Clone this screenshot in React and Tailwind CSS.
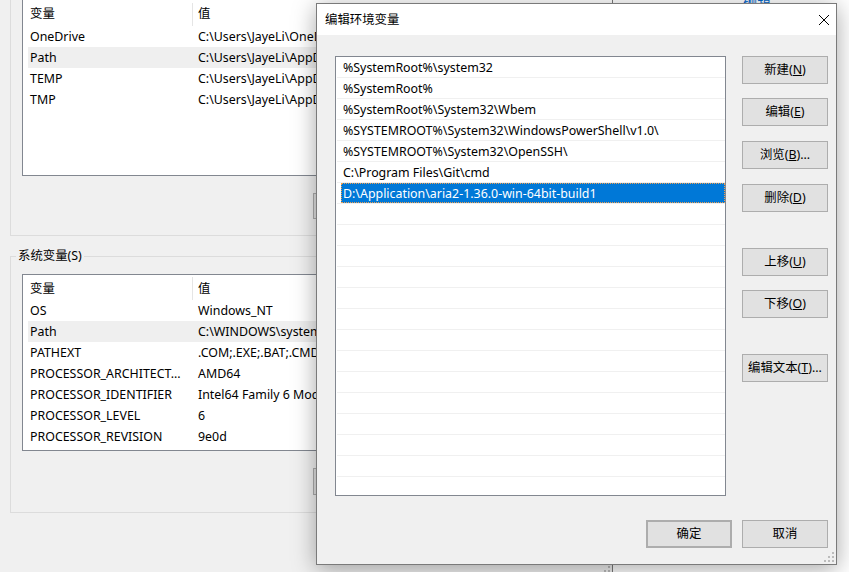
const userVars = [
  ['OneDrive', 'C:\\Users\\JayeLi\\OneDrive'],
  ['Path', 'C:\\Users\\JayeLi\\AppData\\Local\\Microsoft\\WindowsApps;'],
  ['TEMP', 'C:\\Users\\JayeLi\\AppData\\Local\\Temp'],
  ['TMP', 'C:\\Users\\JayeLi\\AppData\\Local\\Temp'],
];

const sysVars = [
  ['OS', 'Windows_NT'],
  ['Path', 'C:\\WINDOWS\\system32;C:\\WINDOWS;C:\\WINDOWS\\System32\\Wbem;'],
  ['PATHEXT', '.COM;.EXE;.BAT;.CMD;.VBS;.VBE;.JS;.JSE;.WSF;.WSH;.MSC'],
  ['PROCESSOR_ARCHITECT...', 'AMD64'],
  ['PROCESSOR_IDENTIFIER', 'Intel64 Family 6 Model 158 Stepping 13, GenuineIntel'],
  ['PROCESSOR_LEVEL', '6'],
  ['PROCESSOR_REVISION', '9e0d'],
];

const paths = [
  '%SystemRoot%\\system32',
  '%SystemRoot%',
  '%SystemRoot%\\System32\\Wbem',
  '%SYSTEMROOT%\\System32\\WindowsPowerShell\\v1.0\\',
  '%SYSTEMROOT%\\System32\\OpenSSH\\',
  'C:\\Program Files\\Git\\cmd',
  'D:\\Application\\aria2-1.36.0-win-64bit-build1',
];

function Grip() {
  return (
    <svg width="10" height="10" viewBox="0 0 10 10">
      <rect x="8" y="0" width="2" height="2" fill="#bcbcbc" />
      <rect x="4" y="4" width="2" height="2" fill="#bcbcbc" />
      <rect x="8" y="4" width="2" height="2" fill="#bcbcbc" />
      <rect x="0" y="8" width="2" height="2" fill="#bcbcbc" />
      <rect x="4" y="8" width="2" height="2" fill="#bcbcbc" />
      <rect x="8" y="8" width="2" height="2" fill="#bcbcbc" />
    </svg>
  );
}

function Btn({ children, className = '' }) {
  return (
    <div className={`flex h-[28px] w-[86px] shrink-0 items-center justify-center border border-[#adadad] bg-[#e1e1e1] text-black ${className}`}>
      {children}
    </div>
  );
}

function VarRows({ rows }) {
  return rows.map(([name, value]) => (
    <div
      key={name}
      className={`ml-[5px] flex h-[21px] items-center whitespace-nowrap pt-[2px] ${name === 'Path' ? 'bg-[#efefef]' : ''}`}
    >
      <span className="w-[170px] shrink-0 pl-[2px]">{name}</span>
      <span>{value}</span>
    </div>
  ));
}

function VarHeader({ h }) {
  return (
    <div className={`flex items-center ${h}`}>
      <span className="w-[169px] shrink-0 pl-[7px] pt-[3px]">变量</span>
      <span className="h-[23px] w-px shrink-0 self-end bg-[#e5e5e5]" />
      <span className="pl-[5px] pt-[3px]">值</span>
    </div>
  );
}

export default function App() {
  return (
    <div className="relative flex h-[572px] w-[849px] overflow-hidden bg-white font-['Noto_Sans','Noto_Sans_CJK_SC',sans-serif] text-[12.4px] text-black">
      {/* window behind */}
      <div className="relative h-full w-[613px] shrink-0 overflow-hidden border-r border-[#7a7a7a] bg-[#f0f0f0]">
        <div className="ml-[10px] w-[700px] border-b border-l border-[#dcdcdc] pb-[16px] pl-[11px]">
          <div className="h-[176px] w-[640px] border-b border-l border-[#828790] bg-white">
            <VarHeader h="h-[26px]" />
            <VarRows rows={userVars} />
          </div>
          <div className="ml-[291px] mt-[17px] flex gap-[8px]">
            <div className="flex h-[26px] w-[86px] items-center justify-center border border-[#adadad] bg-[#e1e1e1]">新建(N)...</div>
          </div>
        </div>

        <fieldset className="ml-[10px] mt-[12px] w-[700px] border border-[#dcdcdc] pb-[17px]">
          <legend className="ml-[5px] px-[2px] leading-[16px]">系统变量(S)</legend>
          <div className="ml-[11px] mt-[10px] w-[640px] border border-[#828790] bg-white pb-[3px]">
            <VarHeader h="h-[25px]" />
            <VarRows rows={sysVars} />
          </div>
          <div className="ml-[302px] mt-[17px] flex">
            <div className="flex h-[27px] w-[86px] items-center justify-center border border-[#adadad] bg-[#e1e1e1]">新建(W)...</div>
          </div>
        </fieldset>

        <div className="absolute bottom-[-4px] right-[2px]">
          <Grip />
        </div>
      </div>

      {/* window on the right, mostly hidden */}
      <div className="flex-1 bg-white">
        <div className="ml-[130px] mt-[-11px] text-[14px] text-[#0066cc] underline">编辑...</div>
      </div>

      {/* dialog */}
      <div className="absolute left-[316px] top-[3px] flex h-[562px] w-[521px] flex-col border border-[#7a7a7a] bg-[#f0f0f0] shadow-[0_4px_22px_rgba(0,0,0,0.35)]">
        <div className="flex h-[31px] shrink-0 items-center justify-between bg-white pl-[8px] pr-[5px] pt-[1px]">
          <span>编辑环境变量</span>
          <svg width="12" height="12" viewBox="0 0 12 12" className="mr-[1px]">
            <path d="M1 1L11 11M11 1L1 11" stroke="#000" strokeWidth="1" />
          </svg>
        </div>

        <div className="flex pl-[18px] pt-[21px]">
          <div className="h-[440px] w-[391px] shrink-0 overflow-hidden border border-[#828790] bg-white">
            {Array.from({ length: 21 }).map((_, i) => {
              const text = paths[i];
              const sel = i === 6;
              return (
                <div key={i} className="ml-[1px] flex h-[21px] flex-col">
                  <div
                    className={
                      sel
                        ? 'ml-[4px] flex h-[20px] items-center whitespace-nowrap border border-dotted border-[#f0a050] bg-[#0078d7] pl-[1px] pt-[2px] text-white'
                        : 'flex h-[20px] items-center whitespace-nowrap pl-[6px] pt-[2px]'
                    }
                  >
                    {text}
                  </div>
                  <div className="h-px bg-[#f0f0f0]" />
                </div>
              );
            })}
          </div>

          <div className="ml-[16px] flex flex-col">
            <Btn>新建(<u>N</u>)</Btn>
            <Btn className="mt-[14px]">编辑(<u>E</u>)</Btn>
            <Btn className="mt-[15px]">浏览(<u>B</u>)...</Btn>
            <Btn className="mt-[15px]">删除(<u>D</u>)</Btn>
            <Btn className="mt-[36px]">上移(<u>U</u>)</Btn>
            <Btn className="mt-[14px]">下移(<u>O</u>)</Btn>
            <Btn className="mt-[36px]">编辑文本(<u>T</u>)...</Btn>
          </div>
        </div>

        <div className="mt-[24px] flex justify-end gap-[10px] pr-[8px]">
          <Btn className="border-2 border-[#0078d7]">确定</Btn>
          <Btn>取消</Btn>
        </div>

        <div className="absolute bottom-[2px] right-[2px]">
          <Grip />
        </div>
      </div>
    </div>
  );
}
